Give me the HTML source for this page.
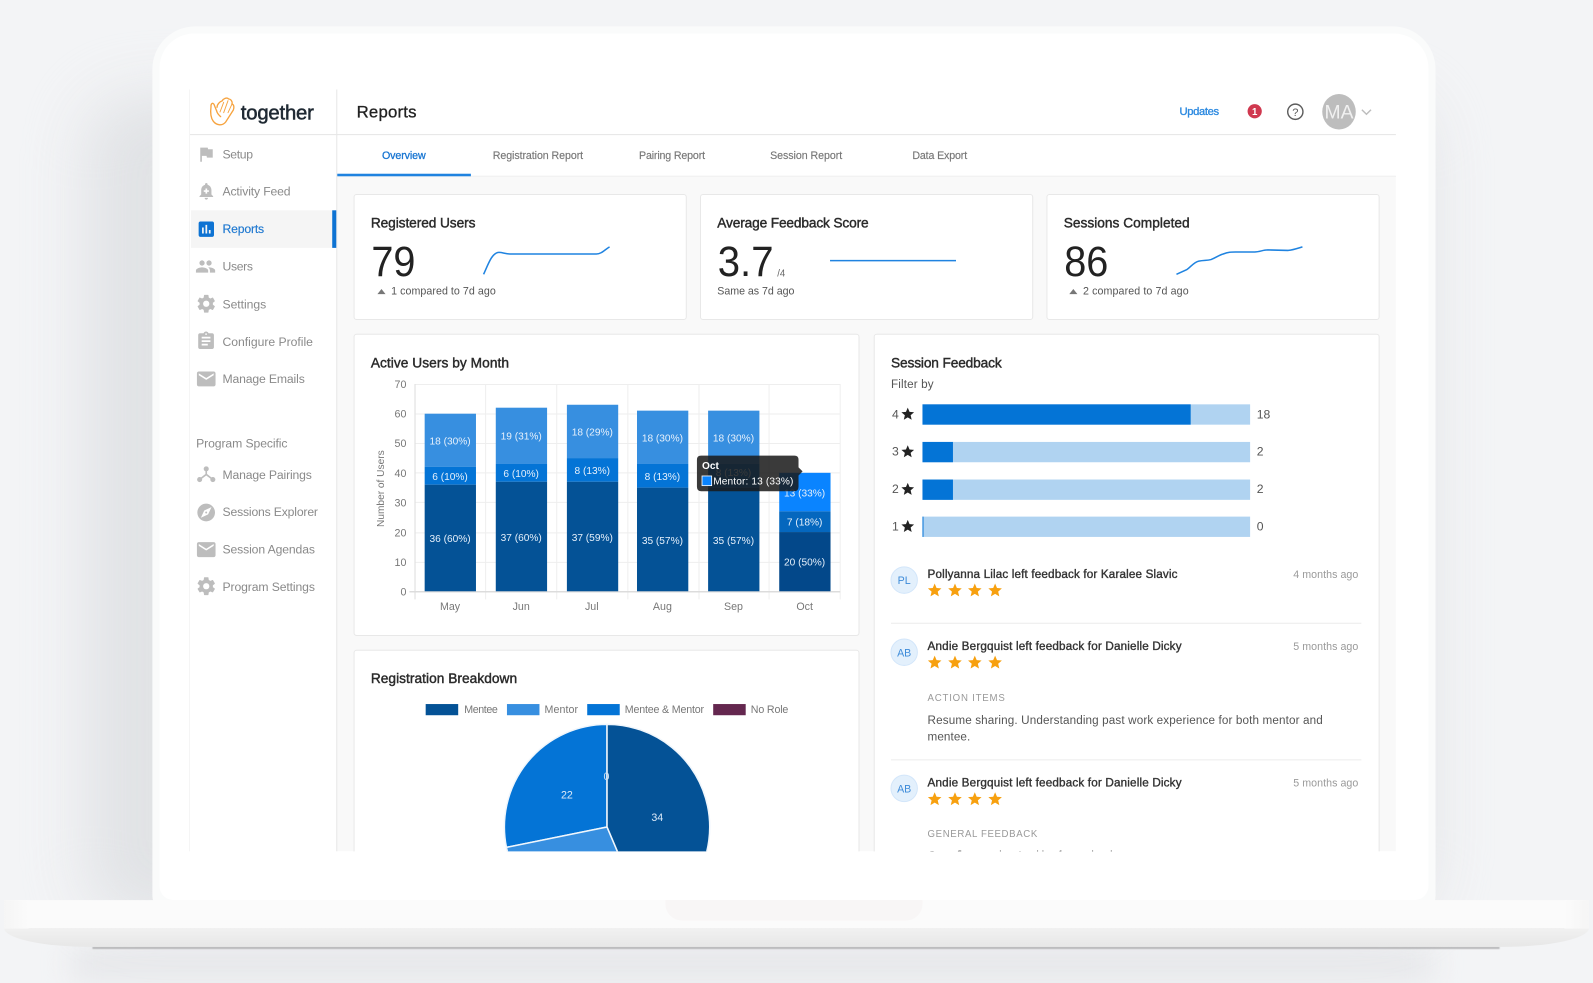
<!DOCTYPE html>
<html lang="en"><head><meta charset="utf-8"><title>Together Reports</title>
<style>
html,body{margin:0;padding:0;width:1593px;height:983px;overflow:hidden;background:#f3f4f6}
#w{position:absolute;left:0;top:0;width:1568px;height:968px;transform:scale(1.01594);transform-origin:0 0;overflow:hidden}
#w div{position:absolute}
svg{position:absolute;left:0;top:0;filter:blur(.35px)}
text{font-family:"Liberation Sans",Arial,sans-serif}
.n{font-size:12px;fill:#8a8a8a}
.h{font-size:13.5px;fill:#2b2b2b;stroke:#2b2b2b;stroke-width:.42}
.b{font-size:42px;fill:#222}
.s{font-size:10.5px;fill:#555}
.tb{font-size:10.5px;fill:#777;stroke:#777;stroke-width:.15}
.ax{font-size:10.5px;fill:#777}
.l{font-size:10px;fill:#e6f0fb;text-anchor:middle}
.ft{font-size:11.5px;fill:#333;stroke:#333;stroke-width:.36}
.tm{font-size:10.5px;fill:#9a9a9a}
.cap{font-size:9.5px;fill:#999}
.p{font-size:11.5px;fill:#555}
.av{font-size:10.5px;fill:#3d8bd9;text-anchor:middle}
.c{fill:#fff;stroke:#e8e8e8;stroke-width:1}
.g{stroke:#eeeeee;stroke-width:1;fill:none}
</style></head><body>
<div id="w">
<div style="left:85px;top:95px;width:1320px;height:810px;border-radius:50px;background:#dcdee1;filter:blur(30px);opacity:.8"></div>
<div style="left:150px;top:26px;width:1263px;height:870px;border-radius:42px 42px 14px 14px;background:#fafbfb"></div>
<div style="left:157px;top:33px;width:1249px;height:853px;border-radius:34px 34px 14px 14px;background:#fff"></div>
<div style="left:70px;top:932px;width:1340px;height:34px;background:#e6e7ea;filter:blur(14px)"></div>
<div style="left:91px;top:931.500px;width:1385px;height:2px;background:#b2b2b4;filter:blur(.6px)"></div>
<div style="left:4px;top:886px;width:1560px;height:46px;border-radius:0 0 85px 85px/0 0 18.500px 18.500px;background:linear-gradient(#fbfbfb 0,#fbfbfb 27.500px,#f1f1f1 27.500px,#e7e7e7 46px)"></div>
<div style="left:4px;top:886px;width:24px;height:27.500px;background:linear-gradient(90deg,#f5f5f5,#fbfbfb)"></div>
<div style="left:1540px;top:886px;width:24px;height:27.500px;background:linear-gradient(270deg,#f5f5f5,#fbfbfb)"></div>
<div style="left:655px;top:886px;width:253px;height:20px;border-radius:0 0 16px 16px;background:#f8f6f6"></div>

<svg width="1568" height="968" viewBox="0 0 1568 968" xmlns="http://www.w3.org/2000/svg">
<defs>
<clipPath id="cl"><rect x="186" y="88" width="1189" height="750"/></clipPath>
<symbol id="star" viewBox="0 0 24 24"><path d="M12 17.27L18.18 21l-1.64-7.03L22 9.24l-7.19-.61L12 2 9.19 8.63 2 9.24l5.46 4.73L5.82 21z"/></symbol>
<symbol id="gear" viewBox="0 0 24 24"><path d="M19.43 12.98c.04-.32.07-.64.07-.98s-.03-.66-.07-.98l2.11-1.65c.19-.15.24-.42.12-.64l-2-3.46c-.12-.22-.39-.3-.61-.22l-2.49 1c-.52-.4-1.08-.73-1.69-.98l-.38-2.65C14.46 2.18 14.25 2 14 2h-4c-.25 0-.46.18-.49.42l-.38 2.65c-.61.25-1.17.59-1.69.98l-2.49-1c-.23-.09-.49 0-.61.22l-2 3.46c-.13.22-.07.49.12.64l2.11 1.65c-.04.32-.07.65-.07.98s.03.66.07.98l-2.11 1.65c-.19.15-.24.42-.12.64l2 3.46c.12.22.39.3.61.22l2.49-1c.52.4 1.08.73 1.69.98l.38 2.65c.03.24.24.42.49.42h4c.25 0 .46-.18.49-.42l.38-2.65c.61-.25 1.17-.59 1.69-.98l2.49 1c.23.09.49 0 .61-.22l2-3.46c.12-.22.07-.49-.12-.64l-2.11-1.65zM12 15.500c-1.930 0-3.500-1.570-3.500-3.500s1.570-3.500 3.500-3.500 3.500 1.570 3.500 3.500-1.570 3.500-3.500 3.500z"/></symbol>
<symbol id="mail" viewBox="0 0 24 24"><path d="M20 4H4c-1.100 0-1.990.9-1.990 2L2 18c0 1.100.9 2 2 2h16c1.100 0 2-.9 2-2V6c0-1.100-.9-2-2-2zm0 4l-8 5-8-5V6l8 5 8-5v2z"/></symbol>
</defs>
<g clip-path="url(#cl)">
<rect x="332" y="173" width="1042" height="665" fill="#f9f9f9"/>
<path d="M187 132.500H1374" stroke="#e5e5e5" fill="none"/>
<path d="M332 173.500H1374" stroke="#efefef" fill="none"/>
<path d="M331.500 88V838" stroke="#e6e6e6" fill="none"/>
<path d="M186.500 88V838" stroke="#f5f5f5" fill="none"/>

<!-- logo -->
<g transform="translate(98.440,0) scale(.3281)" fill="none" stroke="#f6a33f" stroke-linecap="round" stroke-linejoin="round">
<g stroke-width="4">
<path d="M350 333L342 313C338 306 332 312 333 320C331 335 331 352 340 364C350 377 368 378 377 366L400 330C403 322 402 314 396 312"/>
<path d="M351 322C351 313 360 304 366 303C370 296 380 291 386 297C392 297 398 304 396 312"/>
<path d="M350 333C352 342 358 346 362 350"/>
</g>
<g stroke-width="2.800"><path d="M360 336L371 307M371 338L384 302M384 338L395 314"/></g>
</g>
<text x="237" y="117.500" font-size="20" fill="#1f2933" stroke="#1f2933" stroke-width=".5" textLength="72">together</text>
<text x="351" y="115.500" font-size="16.500" fill="#222" stroke="#222" stroke-width=".3" textLength="59">Reports</text>

<!-- top right -->
<text x="1161" y="113" font-size="11" fill="#2d8ae0" stroke="#2d8ae0" stroke-width=".35" textLength="39">Updates</text>
<circle cx="1235" cy="109.500" r="7" fill="#d0384f"/>
<text x="1235" y="113" font-size="9.500" font-weight="700" fill="#fff" text-anchor="middle">1</text>
<circle cx="1275" cy="110" r="7.500" fill="none" stroke="#5c5c5c" stroke-width="1.400"/>
<text x="1275" y="114" font-size="11" fill="#5c5c5c" text-anchor="middle">?</text>
<ellipse cx="1318" cy="110" rx="16.500" ry="17.500" fill="#bdbdbd"/>
<text x="1318" y="116.500" font-size="19" fill="#f1f1f1" text-anchor="middle">MA</text>
<path d="M1340.500 108L1345 112.500L1349.500 108" fill="none" stroke="#bdbdbd" stroke-width="1.400"/>

<!-- sidebar -->
<rect x="188" y="207" width="139" height="37" fill="#f5f5f5"/>
<rect x="327" y="207" width="4" height="37" fill="#0e73d3"/>
<g fill="#bdbdbd">
<path transform="translate(193,142) scale(.82)" d="M14.400 6L14 4H5v17h2v-7h5.600l.4 2h7V6z"/>
<path transform="translate(193,178) scale(.84)" d="M12 22c1.100 0 2-.9 2-2h-4c0 1.100.9 2 2 2zm6-6v-5c0-3.070-1.640-5.640-4.500-6.320V4c0-.83-.67-1.500-1.500-1.500s-1.500.67-1.500 1.500v.68C7.630 5.360 6 7.920 6 11v5l-2 2v1h16v-1l-2-2zm-3-3h-2v2h-2v-2H9v-2h2V9h2v2h2v2z"/>
<path transform="translate(193,215.500) scale(.84)" fill="#0e73d3" d="M19 3H5c-1.100 0-2 .9-2 2v14c0 1.100.9 2 2 2h14c1.100 0 2-.9 2-2V5c0-1.100-.9-2-2-2zM9 17H7v-7h2v7zm4 0h-2V7h2v10zm4 0h-2v-4h2v4z"/>
<path transform="translate(192,252) scale(.86)" d="M16 11c1.660 0 2.990-1.340 2.990-3S17.660 5 16 5c-1.660 0-3 1.340-3 3s1.340 3 3 3zm-8 0c1.660 0 2.990-1.340 2.990-3S9.660 5 8 5C6.340 5 5 6.340 5 8s1.340 3 3 3zm0 2c-2.330 0-7 1.170-7 3.500V19h14v-2.500c0-2.330-4.670-3.500-7-3.500zm8 0c-.29 0-.62.020-.97.050 1.160.84 1.970 1.970 1.970 3.450V19h6v-2.500c0-2.330-4.670-3.500-7-3.500z"/>
<use href="#gear" x="192.500" y="288.500" width="21" height="21"/>
<path transform="translate(192.500,325.500) scale(.86)" d="M19 3h-4.180C14.400 1.840 13.300 1 12 1c-1.300 0-2.400.84-2.820 2H5c-1.100 0-2 .9-2 2v14c0 1.100.9 2 2 2h14c1.100 0 2-.9 2-2V5c0-1.100-.9-2-2-2zm-7 0c.55 0 1 .45 1 1s-.45 1-1 1-1-.45-1-1 .45-1 1-1zm2 14H7v-2h7v2zm3-4H7v-2h10v2zm0-4H7V7h10v2z"/>
<use href="#mail" x="192" y="362" width="22" height="22"/>
<use href="#mail" x="192" y="530" width="22" height="22"/>
<use href="#gear" x="192.500" y="566.500" width="21" height="21"/>
<path transform="translate(192.500,494) scale(.87)" d="M12 10.900c-.61 0-1.100.49-1.100 1.100s.49 1.100 1.100 1.100c.61 0 1.100-.49 1.100-1.100s-.49-1.100-1.100-1.100zM12 2C6.480 2 2 6.480 2 12s4.480 10 10 10 10-4.480 10-10S17.520 2 12 2zm2.190 12.190L6 18l3.810-8.190L18 6l-3.810 8.190z"/>
<circle cx="203" cy="461.500" r="2.500"/><circle cx="196.500" cy="472" r="2.500"/><circle cx="209.500" cy="472" r="2.500"/>
<path d="M203 461.500V467L196.500 472M203 467L209.500 472" stroke="#bdbdbd" stroke-width="1.600" fill="none"/>
</g>
<text class="n" x="219" y="156" textLength="30">Setup</text>
<text class="n" x="219" y="192.500" textLength="67">Activity Feed</text>
<text class="n" x="219" y="229.500" textLength="41" style="fill:#1e78d0;stroke:#1e78d0;stroke-width:.15">Reports</text>
<text class="n" x="219" y="266.500" textLength="30">Users</text>
<text class="n" x="219" y="303.500" textLength="43">Settings</text>
<text class="n" x="219" y="340.500" textLength="89">Configure Profile</text>
<text class="n" x="219" y="377" textLength="81">Manage Emails</text>
<text class="n" x="193" y="440.500" textLength="90">Program Specific</text>
<text class="n" x="219" y="471.500" textLength="88">Manage Pairings</text>
<text class="n" x="219" y="508" textLength="94">Sessions Explorer</text>
<text class="n" x="219" y="545" textLength="91">Session Agendas</text>
<text class="n" x="219" y="581.500" textLength="91">Program Settings</text>

<!-- tabs -->
<rect x="332" y="171" width="131.500" height="2.500" fill="#1f83e0"/>
<text x="376" y="156.500" font-size="10.500" fill="#1976d2" stroke="#1976d2" stroke-width=".3" textLength="43">Overview</text>
<text class="tb" x="485" y="156.500" textLength="89">Registration Report</text>
<text class="tb" x="629" y="156.500" textLength="65">Pairing Report</text>
<text class="tb" x="758" y="156.500" textLength="71">Session Report</text>
<text class="tb" x="898" y="156.500" textLength="54">Data Export</text>

<!-- stat cards -->
<rect class="c" x="348.500" y="191.500" width="327" height="123" rx="2.500"/>
<rect class="c" x="689.500" y="191.500" width="327" height="123" rx="2.500"/>
<rect class="c" x="1030.500" y="191.500" width="327" height="123" rx="2.500"/>
<text class="h" x="365" y="224" textLength="103">Registered Users</text>
<text class="h" x="706" y="224" textLength="149">Average Feedback Score</text>
<text class="h" x="1047" y="224" textLength="124">Sessions Completed</text>
<text class="b" transform="translate(365.500,271.500) scale(.93,1)">79</text>
<text class="b" transform="translate(706.500,271.500) scale(.94,1)">3.7</text>
<text class="b" transform="translate(1047.500,271.500) scale(.93,1)">86</text>
<text x="765" y="272" font-size="9.500" fill="#666">/4</text>
<path d="M371.500 289.500L375.500 284.500L379.500 289.500Z" fill="#777"/>
<path d="M1052.500 289.500L1056.500 284.500L1060.500 289.500Z" fill="#777"/>
<text class="s" x="385" y="290" textLength="103">1 compared to 7d ago</text>
<text class="s" x="706" y="290" textLength="76">Same as 7d ago</text>
<text class="s" x="1066" y="290" textLength="104">2 compared to 7d ago</text>
<path d="M476 270C481 259 484 250 490 248.500C494 248 497 250 502 250L587 250C592 250 595 246 600 243" fill="none" stroke="#1f83e0" stroke-width="1.500"/>
<path d="M817 256.500H941" fill="none" stroke="#1f83e0" stroke-width="1.500"/>
<path d="M1158 270L1168 265.500C1172 263 1175 258 1180 257C1185 256 1188 256.500 1192 255.500C1197 253.500 1200 251 1204 250C1209 248 1212 248 1216 248H1235C1240 248 1243 246 1248 246L1268 246.500C1273 246 1277 244.500 1282 243" fill="none" stroke="#1f83e0" stroke-width="1.500"/>

<!-- chart card -->
<rect class="c" x="348.500" y="329" width="497" height="296.500" rx="2.500"/>
<text class="h" x="365" y="361.500" textLength="136">Active Users by Month</text>
<path class="g" d="M408 378.500H827M408 407.500H827M408 436.500H827M408 465.500H827M408 494.500H827M408 524.500H827M408 553.500H827"/>
<path class="g" d="M478 378V590M548 378V590M618 378V590M688 378V590M757 378V590M827 378V590"/>
<path d="M408.500 378V590" stroke="#e2e2e2" fill="none" stroke-width="1.200"/>
<path d="M403 582.500H827" stroke="#dcdcdc" fill="none" stroke-width="1.500"/>
<g text-anchor="end">
<text class="ax" x="400" y="382">70</text><text class="ax" x="400" y="411">60</text><text class="ax" x="400" y="440">50</text><text class="ax" x="400" y="469.500">40</text><text class="ax" x="400" y="498.500">30</text><text class="ax" x="400" y="528">20</text><text class="ax" x="400" y="557">10</text><text class="ax" x="400" y="586">0</text>
</g>
<text class="ax" transform="translate(378,481) rotate(-90)" text-anchor="middle" style="font-size:10px">Number of Users</text>
<g text-anchor="middle">
<text class="ax" x="443" y="600.500">May</text><text class="ax" x="513" y="600.500">Jun</text><text class="ax" x="582.500" y="600.500">Jul</text><text class="ax" x="652" y="600.500">Aug</text><text class="ax" x="722" y="600.500">Sep</text><text class="ax" x="792" y="600.500">Oct</text>
</g>
<g>
<rect x="418" y="407.200" width="50.500" height="52.400" fill="#378fe0"/><rect x="418" y="459.600" width="50.500" height="17.500" fill="#0474d6"/><rect x="418" y="477.100" width="50.500" height="104.900" fill="#045296"/>
<rect x="488" y="401.300" width="50.500" height="55.400" fill="#378fe0"/><rect x="488" y="456.700" width="50.500" height="17.500" fill="#0474d6"/><rect x="488" y="474.200" width="50.500" height="107.800" fill="#045296"/>
<rect x="558" y="398.400" width="50.500" height="52.500" fill="#378fe0"/><rect x="558" y="450.900" width="50.500" height="23.300" fill="#0474d6"/><rect x="558" y="474.200" width="50.500" height="107.800" fill="#045296"/>
<rect x="627" y="404.200" width="50.500" height="52.500" fill="#378fe0"/><rect x="627" y="456.700" width="50.500" height="23.300" fill="#0474d6"/><rect x="627" y="480" width="50.500" height="102" fill="#045296"/>
<rect x="697" y="404.200" width="50.500" height="52.500" fill="#378fe0"/><rect x="697" y="456.700" width="50.500" height="23.300" fill="#0474d6"/><rect x="697" y="480" width="50.500" height="102" fill="#045296"/>
<rect x="767" y="465.400" width="50.500" height="37.900" fill="#0a84ff"/><rect x="767" y="503.300" width="50.500" height="20.400" fill="#0567be"/><rect x="767" y="523.700" width="50.500" height="58.300" fill="#03488a"/>
</g>
<text class="l" x="443" y="437.500">18 (30%)</text><text class="l" x="443" y="472.500">6 (10%)</text><text class="l" x="443" y="533.500">36 (60%)</text>
<text class="l" x="513" y="432.500">19 (31%)</text><text class="l" x="513" y="469.500">6 (10%)</text><text class="l" x="513" y="532.500">37 (60%)</text>
<text class="l" x="583" y="428.500">18 (29%)</text><text class="l" x="583" y="466.500">8 (13%)</text><text class="l" x="583" y="532.500">37 (59%)</text>
<text class="l" x="652" y="434.500">18 (30%)</text><text class="l" x="652" y="472.500">8 (13%)</text><text class="l" x="652" y="535.500">35 (57%)</text>
<text class="l" x="722" y="434.500">18 (30%)</text><text class="l" x="722" y="468.500">8 (13%)</text><text class="l" x="722" y="535.500">35 (57%)</text>
<text class="l" x="792" y="488.500">13 (33%)</text><text class="l" x="792" y="517.500">7 (18%)</text><text class="l" x="792" y="556.500">20 (50%)</text>
<path d="M690 448.500H782Q786 448.500 786 452.500V460L790 464L786 468V479Q786 483.500 782 483.500H690Q686 483.500 686 479V452.500Q686 448.500 690 448.500Z" fill="#1a1a1a" fill-opacity=".86"/>
<text x="691" y="461.500" font-size="10" font-weight="700" fill="#fff">Oct</text>
<rect x="691" y="468.500" width="9.500" height="9.500" fill="#0a84ff" stroke="#fff" stroke-width=".8"/>
<text x="702" y="477" font-size="10" fill="#fff" textLength="79">Mentor: 13 (33%)</text>

<!-- registration breakdown -->
<rect class="c" x="348.500" y="640" width="497" height="260" rx="2.500"/>
<text class="h" x="365" y="672.500" textLength="144">Registration Breakdown</text>
<rect x="419" y="693" width="32" height="11" fill="#045296"/><rect x="499" y="693" width="32" height="11" fill="#378fe0"/><rect x="578" y="693" width="32" height="11" fill="#0474d6"/><rect x="702" y="693" width="32" height="11" fill="#64274f"/>
<text class="ax" x="457" y="702" textLength="33">Mentee</text><text class="ax" x="536" y="702" textLength="33">Mentor</text><text class="ax" x="615" y="702" textLength="78">Mentee &amp; Mentor</text><text class="ax" x="739" y="702" textLength="37">No Role</text>
<g stroke="#f0f6fc" stroke-width="1.500" stroke-linejoin="round">
<path d="M597.500 814L498.500 834.100A101 101 0 0 1 597.500 713Z" fill="#0474d6"/>
<path d="M597.500 814L637 907A101 101 0 0 1 498.500 834.100Z" fill="#378fe0"/>
<path d="M597.500 814V713A101 101 0 0 1 637 907Z" fill="#045296"/>
</g>
<text x="558" y="786" font-size="10.500" fill="#dbe9f8" text-anchor="middle">22</text>
<text x="647" y="808" font-size="10.500" fill="#dbe9f8" text-anchor="middle">34</text>
<text x="597" y="768" font-size="10.500" fill="#cfe0f2" text-anchor="middle">0</text>

<!-- session feedback -->
<rect class="c" x="860.500" y="329" width="497" height="570" rx="2.500"/>
<text class="h" x="877" y="361.500" textLength="109">Session Feedback</text>
<text x="877" y="382" font-size="11.500" fill="#555" textLength="42">Filter by</text>
<rect x="908" y="398" width="322.500" height="20" fill="#b0d3f1"/><rect x="908" y="398" width="264" height="20" fill="#0474d6"/>
<rect x="908" y="435" width="322.500" height="20" fill="#b0d3f1"/><rect x="908" y="435" width="30" height="20" fill="#0474d6"/>
<rect x="908" y="472" width="322.500" height="20" fill="#b0d3f1"/><rect x="908" y="472" width="30" height="20" fill="#0474d6"/>
<rect x="908" y="508.500" width="322.500" height="20" fill="#b0d3f1"/><rect x="908" y="508.500" width="1" height="20" fill="#0474d6"/>
<g font-size="12" fill="#555">
<text x="878" y="412">4</text><text x="878" y="448.500">3</text><text x="878" y="485.500">2</text><text x="878" y="522">1</text>
<text x="1237" y="412">18</text><text x="1237" y="448.500">2</text><text x="1237" y="485.500">2</text><text x="1237" y="522">0</text>
</g>
<g fill="#222">
<use href="#star" x="886" y="400" width="15" height="15"/><use href="#star" x="886" y="437" width="15" height="15"/><use href="#star" x="886" y="474" width="15" height="15"/><use href="#star" x="886" y="510.500" width="15" height="15"/>
</g>
<g fill="#e3f0fc" stroke="#d3e6fa"><circle cx="890" cy="571" r="13"/><circle cx="890" cy="642" r="13"/><circle cx="890" cy="776" r="13"/></g>
<text class="av" x="890" y="575">PL</text><text class="av" x="890" y="646">AB</text><text class="av" x="890" y="780">AB</text>
<text class="ft" x="913" y="569" textLength="246">Pollyanna Lilac left feedback for Karalee Slavic</text>
<text class="ft" x="913" y="640" textLength="250">Andie Bergquist left feedback for Danielle Dicky</text>
<text class="ft" x="913" y="774" textLength="250">Andie Bergquist left feedback for Danielle Dicky</text>
<text class="tm" x="1273" y="569" textLength="64">4 months ago</text>
<text class="tm" x="1273" y="640" textLength="64">5 months ago</text>
<text class="tm" x="1273" y="774" textLength="64">5 months ago</text>
<g fill="#f7a00f">
<use href="#star" x="912" y="573" width="16" height="16"/><use href="#star" x="932" y="573" width="16" height="16"/><use href="#star" x="951.500" y="573" width="16" height="16"/><use href="#star" x="971.500" y="573" width="16" height="16"/>
<use href="#star" x="912" y="644" width="16" height="16"/><use href="#star" x="932" y="644" width="16" height="16"/><use href="#star" x="951.500" y="644" width="16" height="16"/><use href="#star" x="971.500" y="644" width="16" height="16"/>
<use href="#star" x="912" y="778.500" width="16" height="16"/><use href="#star" x="932" y="778.500" width="16" height="16"/><use href="#star" x="951.500" y="778.500" width="16" height="16"/><use href="#star" x="971.500" y="778.500" width="16" height="16"/>
</g>
<path d="M877 613.500H1340M877 748H1340" stroke="#ececec" stroke-width="1" fill="none"/>
<text class="cap" x="913" y="690" textLength="76">ACTION ITEMS</text>
<text class="p" x="913" y="712.500" textLength="389">Resume sharing. Understanding past work experience for both mentor and</text>
<text class="p" x="913" y="729" textLength="42">mentee.</text>
<text class="cap" x="913" y="824" textLength="108">GENERAL FEEDBACK</text>
<text class="p" x="913" y="846" textLength="214">Great first meeting. Looking forward to the next</text>
</g>
</svg>
</div>
</body></html>
